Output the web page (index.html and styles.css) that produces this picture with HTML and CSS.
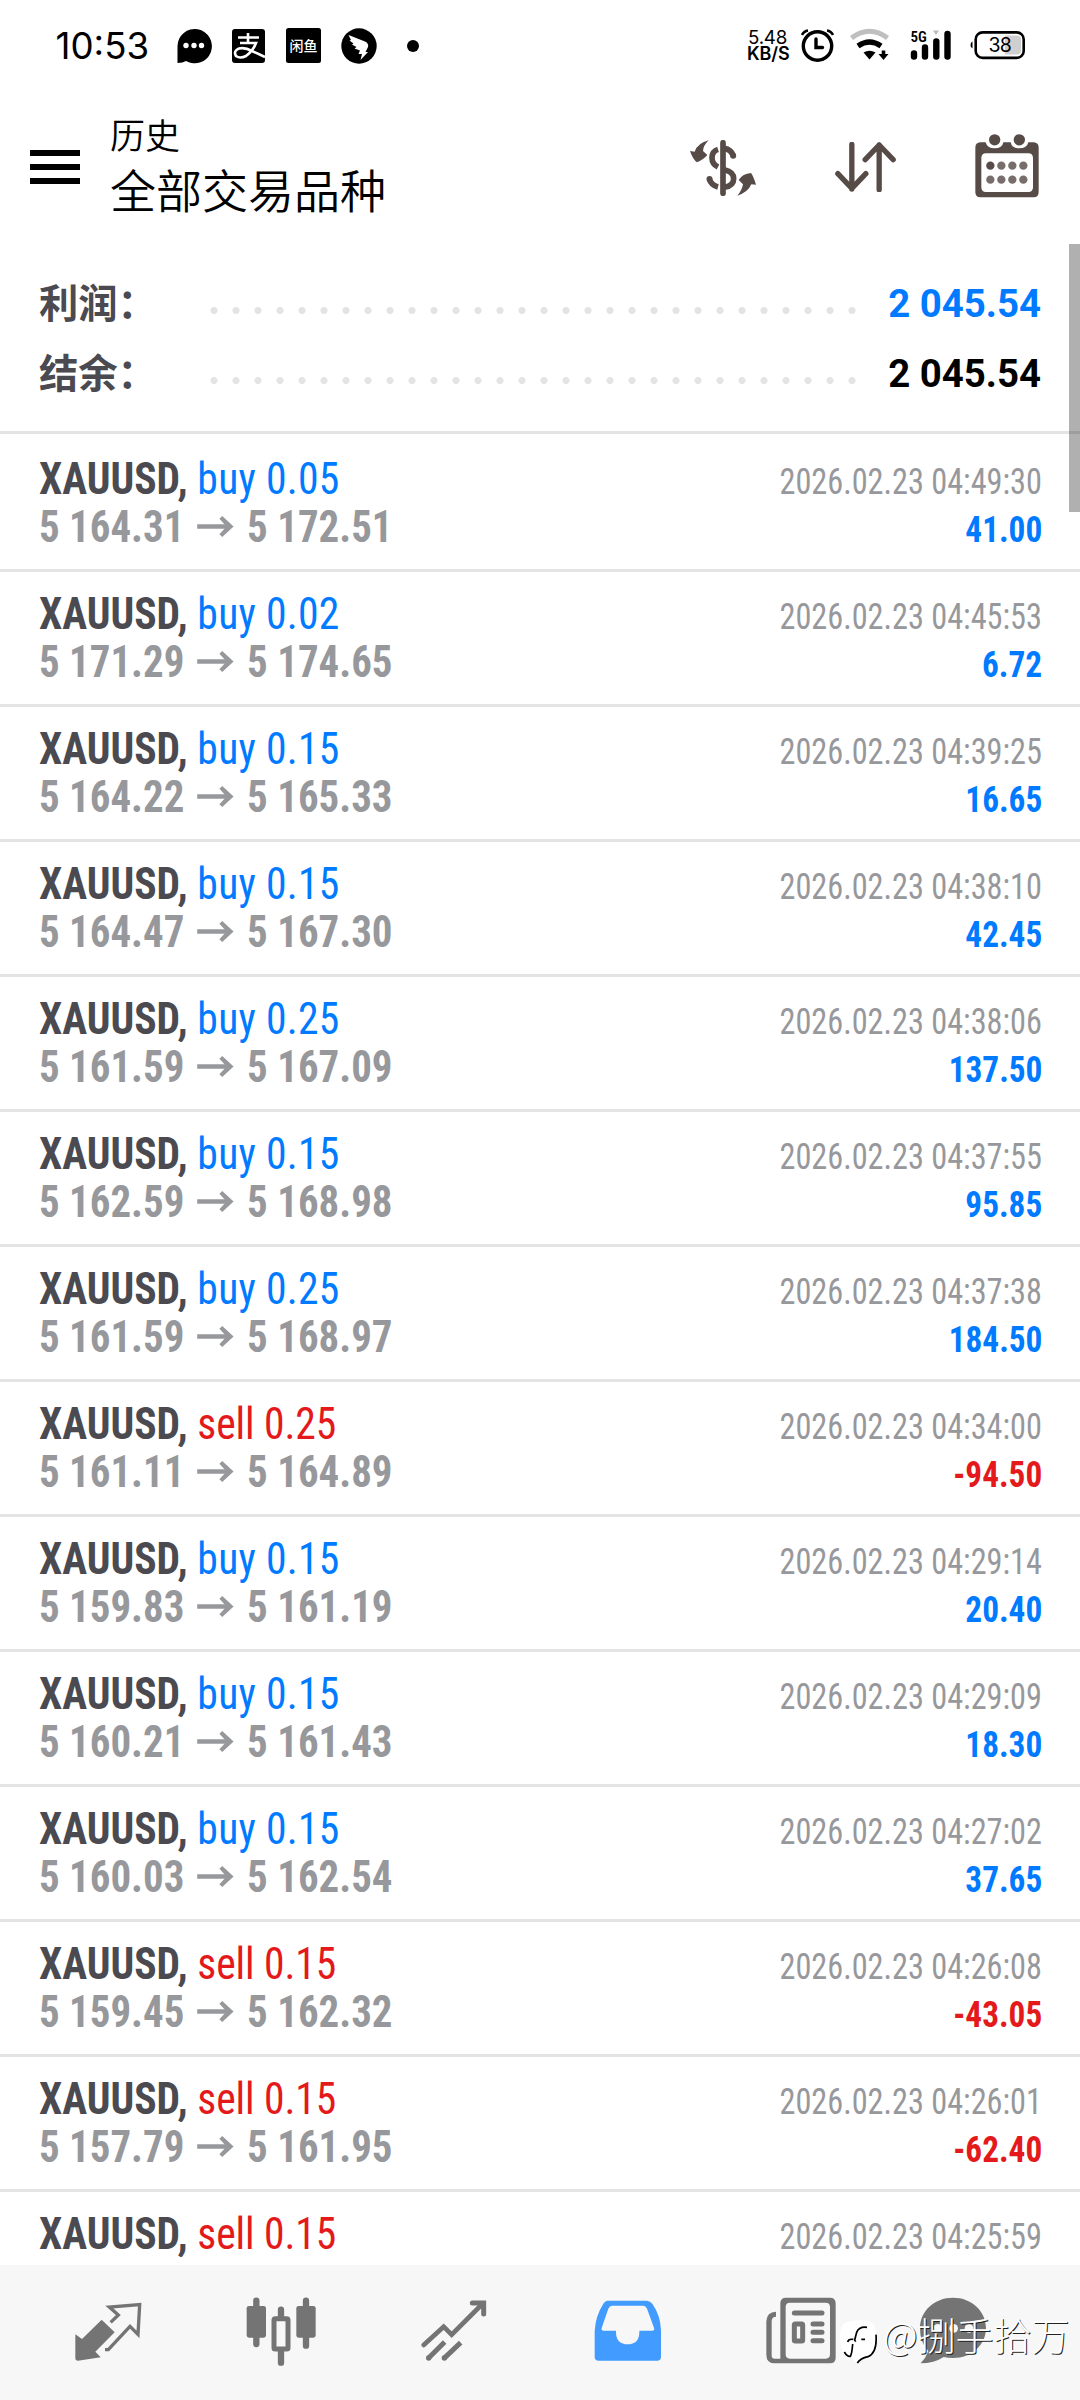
FILE: index.html
```html
<!DOCTYPE html>
<html lang="zh-CN">
<head>
<meta charset="utf-8">
<title>历史</title>
<link rel="stylesheet" href="styles.css">
</head>
<body>
<svg width="0" height="0" class="defs"><defs>
<symbol id="arrow" viewBox="0 0 41 22"><path d="M0 11H36" fill="none" stroke="currentColor" stroke-width="4.8"/><path d="M25 3 28.200 0 41 11 28.200 22 25 19 33 11Z" fill="currentColor"/></symbol>
</defs></svg>
<div class="screen">
<header class="status">
  <span class="clock">10:53</span>
  <div class="apps">
    <svg width="35" height="36" viewBox="0 0 35 36"><path d="M.5 35V18A17.200 17.200 0 1 1 9 33Q6 35 .5 35Z"/><g fill="#fff"><circle cx="9" cy="17.500" r="2.700"/><circle cx="17" cy="17.500" r="2.700"/><circle cx="24.500" cy="17.500" r="2.700"/></g></svg>
    <svg width="33" height="34" viewBox="0 0 33 34"><rect width="33" height="34" rx="3"/><g fill="none" stroke="#fff" stroke-width="2.600"><path d="M6 8.500H27M16 4V14M8 14H24Q21 22 14 27Q8 30 4 27Q1 22 7 19.500Q13 18 20 22L33 28"/></g></svg>
    <svg width="35" height="35" viewBox="0 0 35 35"><rect width="35" height="35" rx="2.500"/><text x="3.500" y="22.500" class="xy">闲鱼</text></svg>
    <svg width="36" height="36" viewBox="0 0 36 36"><circle cx="18" cy="18" r="17.700"/><path d="M7.500 7 24 13.500Q28 15.500 27 19L24.500 24H27L19.500 32 21 26H17.500L19 22.500 13.500 20.500 15.500 19 11 16.500 12.500 15.500 8.500 12.500 10 12Z" fill="#fff"/></svg>
    <i class="dot"></i>
  </div>
  <div class="indicators">
    <div class="speed"><span>5.48</span><b>KB/S</b></div>
    <svg width="33" height="34" viewBox="0 0 33 34"><circle cx="16.500" cy="18" r="14.200" fill="none" stroke="#000" stroke-width="3.400"/><path d="M15 11V19.500H21.500" fill="none" stroke="#000" stroke-width="3.400" stroke-linecap="round"/><path d="M1 7Q3 3 7 2.500M32 7Q30 3 26 2.500" fill="none" stroke="#000" stroke-width="2.600"/></svg>
    <svg class="wifi" width="40" height="34" viewBox="0 0 40 34"><path d="M1.500 10Q19.500-3.500 37.500 10" fill="none" stroke="#bfbfbf" stroke-width="5"/><path d="M8 18Q19.500 10 31 18" fill="none" stroke="#000" stroke-width="5.200"/><path d="M13.500 24.500Q19.500 21 25.500 24.500L19.500 31.500Z"/><path d="M31.700 22.500H35.300V26H38.500L33.500 32 28.500 26H31.700Z"/></svg>
    <svg class="signal" width="42" height="34" viewBox="0 0 42 34"><g stroke="#000" stroke-width="6.400" stroke-linecap="round"><path d="M4 25.500V28.500M15 19.500V28.500M26.300 13.500V28.500M37.500 6V28.500"/></g><path d="M23 2.500H29L26 7Z" fill="#bbb"/><text x=".5" y="13.500" class="g5">5G</text></svg>
    <svg width="56" height="34" viewBox="0 0 56 34"><rect x="5.700" y="4.400" width="48" height="25.500" rx="7" fill="#fff" stroke="#000" stroke-width="2.600"/><path d="M35 7.500H47Q51 7.500 51 11.500V22.500Q51 26.500 47 26.500H35Z" fill="#cfcfcf"/><path d="M2.500 13.500V20.500Q.5 20 .5 17T2.500 13.500Z"/><text x="18.500" y="24" class="bat">38</text></svg>
  </div>
</header>
<div class="toolbar">
  <div class="burger"><i></i><i></i><i></i></div>
  <div class="titles"><div class="small">历史</div><div class="big">全部交易品种</div></div>
  <div class="tools">
    <svg width="66" height="56" viewBox="57 57 198 168"><path d="M113 58Q96 75 96 90L109 102Q95 118 78 124 66 116 57 90L71 92Q80 66 113 58ZM199 224Q213 208 216 190L203 177Q215 158 240 156 247 165 255 191L241 190Q231 214 199 224Z"/><path d="M156 65V217" stroke-width="17" stroke-linecap="round" class="ln"/><path d="M141 85Q123 91 123 110T141 138M141 198Q120 192 115 174" class="ln" stroke-width="17"/><circle cx="115.500" cy="174" r="9"/><path d="M160 82Q180 85 187 104M160 146Q188 152 188 173T160 199" class="ln" stroke-width="17"/><circle cx="186.500" cy="104" r="9"/></svg>
    <svg width="61" height="50" viewBox="494 66 182 150"><path d="M544 73V207M502 161 544 205 586 161M626 209V75M584 119 626 75 668 119" class="ln" stroke-width="16" stroke-linecap="round" stroke-linejoin="round"/></svg>
    <svg width="64" height="64" viewBox="914 41 192 192"><path fill-rule="evenodd" d="M930 66H946Q950 84 973 84T999 66H1021Q1024 84 1047 84T1074 66H1090Q1105 67 1105 82V216Q1105 231 1090 231H930Q915 231 915 216V82Q915 67 930 66ZM947 99Q933 99 933 113V201Q933 215 947 215H1074Q1088 215 1088 201V113Q1088 99 1074 99Z"/><circle cx="973" cy="58.500" r="17"/><circle cx="1047" cy="58.500" r="17"/><circle cx="960" cy="136" r="12.500"/><g opacity=".8"><circle cx="993" cy="136" r="12.500"/><circle cx="1026" cy="136" r="12.500"/><circle cx="1059" cy="136" r="12.500"/><circle cx="960" cy="178" r="12.500"/><circle cx="993" cy="178" r="12.500"/><circle cx="1026" cy="178" r="12.500"/><circle cx="1059" cy="178" r="12.500"/></g></svg>
  </div>
</div>
<main class="content">
<section class="summary">
  <div class="sum"><span class="label">利润：</span><i class="dots"></i><b class="blue">2 045.54</b></div>
  <div class="sum"><span class="label">结余：</span><i class="dots"></i><b>2 045.54</b></div>
</section>
<section class="deals">
<article class="deal"><div class="line"><p class="name"><b>XAUUSD,</b> <span class="blue">buy 0.05</span></p><time>2026.02.23 04:49:30</time></div><div class="line"><p class="price">5 164.31<svg><use href="#arrow"/></svg>5 172.51</p><b class="profit blue">41.00</b></div></article>
<article class="deal"><div class="line"><p class="name"><b>XAUUSD,</b> <span class="blue">buy 0.02</span></p><time>2026.02.23 04:45:53</time></div><div class="line"><p class="price">5 171.29<svg><use href="#arrow"/></svg>5 174.65</p><b class="profit blue">6.72</b></div></article>
<article class="deal"><div class="line"><p class="name"><b>XAUUSD,</b> <span class="blue">buy 0.15</span></p><time>2026.02.23 04:39:25</time></div><div class="line"><p class="price">5 164.22<svg><use href="#arrow"/></svg>5 165.33</p><b class="profit blue">16.65</b></div></article>
<article class="deal"><div class="line"><p class="name"><b>XAUUSD,</b> <span class="blue">buy 0.15</span></p><time>2026.02.23 04:38:10</time></div><div class="line"><p class="price">5 164.47<svg><use href="#arrow"/></svg>5 167.30</p><b class="profit blue">42.45</b></div></article>
<article class="deal"><div class="line"><p class="name"><b>XAUUSD,</b> <span class="blue">buy 0.25</span></p><time>2026.02.23 04:38:06</time></div><div class="line"><p class="price">5 161.59<svg><use href="#arrow"/></svg>5 167.09</p><b class="profit blue">137.50</b></div></article>
<article class="deal"><div class="line"><p class="name"><b>XAUUSD,</b> <span class="blue">buy 0.15</span></p><time>2026.02.23 04:37:55</time></div><div class="line"><p class="price">5 162.59<svg><use href="#arrow"/></svg>5 168.98</p><b class="profit blue">95.85</b></div></article>
<article class="deal"><div class="line"><p class="name"><b>XAUUSD,</b> <span class="blue">buy 0.25</span></p><time>2026.02.23 04:37:38</time></div><div class="line"><p class="price">5 161.59<svg><use href="#arrow"/></svg>5 168.97</p><b class="profit blue">184.50</b></div></article>
<article class="deal"><div class="line"><p class="name"><b>XAUUSD,</b> <span class="red">sell 0.25</span></p><time>2026.02.23 04:34:00</time></div><div class="line"><p class="price">5 161.11<svg><use href="#arrow"/></svg>5 164.89</p><b class="profit red">-94.50</b></div></article>
<article class="deal"><div class="line"><p class="name"><b>XAUUSD,</b> <span class="blue">buy 0.15</span></p><time>2026.02.23 04:29:14</time></div><div class="line"><p class="price">5 159.83<svg><use href="#arrow"/></svg>5 161.19</p><b class="profit blue">20.40</b></div></article>
<article class="deal"><div class="line"><p class="name"><b>XAUUSD,</b> <span class="blue">buy 0.15</span></p><time>2026.02.23 04:29:09</time></div><div class="line"><p class="price">5 160.21<svg><use href="#arrow"/></svg>5 161.43</p><b class="profit blue">18.30</b></div></article>
<article class="deal"><div class="line"><p class="name"><b>XAUUSD,</b> <span class="blue">buy 0.15</span></p><time>2026.02.23 04:27:02</time></div><div class="line"><p class="price">5 160.03<svg><use href="#arrow"/></svg>5 162.54</p><b class="profit blue">37.65</b></div></article>
<article class="deal"><div class="line"><p class="name"><b>XAUUSD,</b> <span class="red">sell 0.15</span></p><time>2026.02.23 04:26:08</time></div><div class="line"><p class="price">5 159.45<svg><use href="#arrow"/></svg>5 162.32</p><b class="profit red">-43.05</b></div></article>
<article class="deal"><div class="line"><p class="name"><b>XAUUSD,</b> <span class="red">sell 0.15</span></p><time>2026.02.23 04:26:01</time></div><div class="line"><p class="price">5 157.79<svg><use href="#arrow"/></svg>5 161.95</p><b class="profit red">-62.40</b></div></article>
<article class="deal"><div class="line"><p class="name"><b>XAUUSD,</b> <span class="red">sell 0.15</span></p><time>2026.02.23 04:25:59</time></div></article>
</section>
<i class="scrollbar"></i>
</main>
<nav class="tabs">
  <svg viewBox="25 40 240 240"><path d="M126 120 165 158 107 216 123 233 55 243Q47 243 47 235V164L67 178Z"/><path d="M153 128 176 106 149 82 240 75 235 164 211 140 146 210H136" class="ln" stroke-width="10"/></svg>
  <svg viewBox="543 40 240 240"><path d="M589 63V193M738 63V198M663 90V112M663 212V249" class="ln" stroke-width="19" stroke-linecap="round"/><rect x="560" y="79" width="58" height="95" rx="7"/><rect x="709" y="79" width="58" height="95" rx="7"/><rect x="642" y="117" width="42" height="91" rx="4" class="ln" stroke-width="15"/></svg>
  <svg viewBox="1063 40 240 240"><path d="M1092 196 1152 141 1176 165 1265 76" class="ln" stroke-width="14" stroke-linecap="round"/><path d="M1238 70H1272V103" class="ln" stroke-width="15" stroke-linecap="round"/><path d="M1106 236 1155 187M1153 236 1203 189" class="ln" stroke-width="15"/><circle cx="1107" cy="235" r="8"/><circle cx="1154" cy="235" r="8"/></svg>
  <svg viewBox="23 40 240 240" class="active"><path fill-rule="evenodd" d="M80 63H200Q210 64 216 72Q241 108 242 153V231Q242 243 230 243H55Q43 243 43 231V153Q46 108 69 72Q74 64 80 63ZM94 78Q87 79 84 87L64 145Q62 153 70 153H107V160Q109 194 142 194T177 160V153H215Q224 153 221 144L200 87Q197 79 190 78Z"/></svg>
  <svg viewBox="543 40 240 240"><path fill-rule="evenodd" d="M618 54H750Q767 54 767 71V234Q767 251 750 251H585Q559 251 559 225V125Q560 97 588 96V111Q575 111 575 125V228Q575 237 584 237H601V71Q601 54 618 54ZM630 69Q617 69 617 82V224Q617 237 630 237H737Q750 237 750 224V82Q750 69 737 69Z"/><path d="M643 100H726M699 133H726M699 158H726M699 183H726" class="ln" stroke-width="15" stroke-linecap="round"/><rect x="643" y="133" width="25" height="51" rx="3" class="ln" stroke-width="15"/></svg>
  <svg viewBox="999 40 240 240"><path d="M1119 54C1176 54 1218 95 1218 145S1176 235 1119 235Q1104 235 1091 232Q1062 251 1022 251Q1037 236 1045 214Q1020 190 1020 145C1020 95 1062 54 1119 54Z"/><g fill="#f7f7f7"><circle cx="1121" cy="146" r="13"/><circle cx="1073" cy="146" r="13"/><circle cx="1167" cy="146" r="13"/></g></svg>
</nav>
<div class="watermark"><svg width="38" height="45" viewBox="778 118 114 135"><path d="M812 125Q790 126 783 150Q779 172 783 195Q788 219 803 232Q812 236 817 228Q816 237 830 250Q836 238 852 234Q880 230 886 205Q893 180 889 152Q884 125 862 123Q836 120 812 125Z" fill="#fff"/><g fill="none" stroke="#000" stroke-width="5"><path d="M862 143Q838 140 831 158L826 177Q824 186 829 183M804 187Q806 177 821 179M845 179H856M794 217Q803 232 812 230Q817 222 819 193M889 165Q893 220 865 231Q842 236 833 250"/></g></svg><span>@捌手拾万</span></div>
</div>
</body>
</html>
```
FILE: styles.css
```css
*{box-sizing:border-box}
body{margin:0;background:#fff;color:#000;font-family:Roboto,"Noto Sans CJK SC",sans-serif}
p{margin:0}
svg{display:block}
.defs{position:absolute}
.screen{position:relative;width:1080px;height:2400px;overflow:hidden;display:flex;flex-direction:column}
.ln{fill:none;stroke:currentColor}
.blue{color:#007aff}
.red{color:#e3191b}

.status{height:90px;flex:none;display:flex;align-items:center;padding-left:55.500px;font-family:Inter,sans-serif}
.clock{width:121px;font-size:36.700px;line-height:40px;padding-top:2px}
.apps{display:flex;align-items:center;gap:20.500px;padding-top:1px}
.apps .dot{width:12px;height:12px;border-radius:50%;background:#000;margin-left:9.500px}
.xy{fill:#fff;font:500 14px "Noto Sans CJK SC",sans-serif}
.indicators{margin-left:auto;padding-right:54px;display:flex;align-items:center}
.speed{width:54px;display:flex;flex-direction:column;font-size:18.700px;line-height:16px;padding-top:2px}
.speed span{padding-left:1px;letter-spacing:-.2px}
.speed b{font-size:18px;font-weight:600;letter-spacing:-.1px}
.wifi{margin-left:16px}
.signal{margin-left:20px}
.signal + svg{margin-left:18px}
.g5{font:600 15px "Roboto Condensed",sans-serif}
.bat{font:400 19.500px Inter,sans-serif;letter-spacing:-.8px}

.toolbar{height:154px;flex:none;display:flex;align-items:flex-start;padding:24px 41px 0 30px}
.burger{width:50px;display:flex;flex-direction:column;gap:8px;padding-top:36px}
.burger i{height:6px;background:#000}
.titles{padding-left:30px;margin-top:-2px;font-family:"Noto Sans CJK SC",sans-serif;font-weight:350}
.small{font-size:35px;line-height:44px}
.big{font-size:46px;line-height:64px}
.tools{margin-left:auto;display:flex;align-items:center;gap:79px;color:#564b47;fill:#564b47;height:64px;margin-top:20px}
.tools svg:first-child{margin-top:3px}
.tools svg:nth-child(2){margin-top:2px}

.content{position:relative;flex:1;min-height:0;overflow:hidden}
.summary{height:190px;padding:23px 39px 0 39px;border-bottom:3px solid #e4e4e4}
.sum{height:70px;display:flex;align-items:center}
.label{width:163.500px;margin-top:-3px;white-space:nowrap;font:700 39.300px/67px "Noto Sans CJK SC",sans-serif;color:#4b4a50}
.dots{width:660px;height:7px;margin-top:17px;background:radial-gradient(circle,#e4e4e4 3.200px,transparent 3.900px) 0 0/22px 7px}
.sum b{margin-left:auto;font-size:38.400px;white-space:nowrap;padding-top:2px}
.deals{padding-top:3px}
.deal{height:135px;padding:18px 38px 0;border-bottom:3px solid #e4e4e4;font-family:"Roboto Condensed",Roboto,sans-serif}
.line{height:48px;display:flex;justify-content:space-between;align-items:baseline;line-height:48px;white-space:nowrap}
.name,.price{font-size:44px;transform-origin:0 50%}
.name{color:#4b4a50;transform:scaleX(.945);padding-left:1px}
.name .blue{letter-spacing:.3px}
.name .red{letter-spacing:-.1px}
.price{font-weight:700;color:#97989c;transform:scaleX(.93);padding-left:1px}
.price svg{display:inline-block;width:43.500px;height:21px;margin:0 12px;vertical-align:5px}
time{font-size:36px;color:#97989c;transform:scaleX(.896);transform-origin:100% 50%}
.profit{font-size:36px;transform:scaleX(.924);transform-origin:100% 50%}
.scrollbar{position:absolute;top:0;right:0;width:11px;height:268px;background:rgba(0,0,0,.31)}

.tabs{height:135px;flex:none;background:#f7f7f7;color:#747474;fill:#747474;display:grid;grid-template-columns:repeat(5,173.200px) 131px;justify-items:center;padding:28.300px 0 0 21.500px}
.tabs svg{width:80px;height:80px}
.tabs .active{color:#429bff;fill:#429bff}
.watermark{position:absolute;left:839px;top:2312px;display:flex;align-items:flex-start;gap:6px;white-space:nowrap}
.watermark svg{margin-top:7px}
.watermark span{font:300 38px/44px "Noto Sans CJK SC",sans-serif;color:#fff;text-shadow:1px 1px 0 #222}
```
